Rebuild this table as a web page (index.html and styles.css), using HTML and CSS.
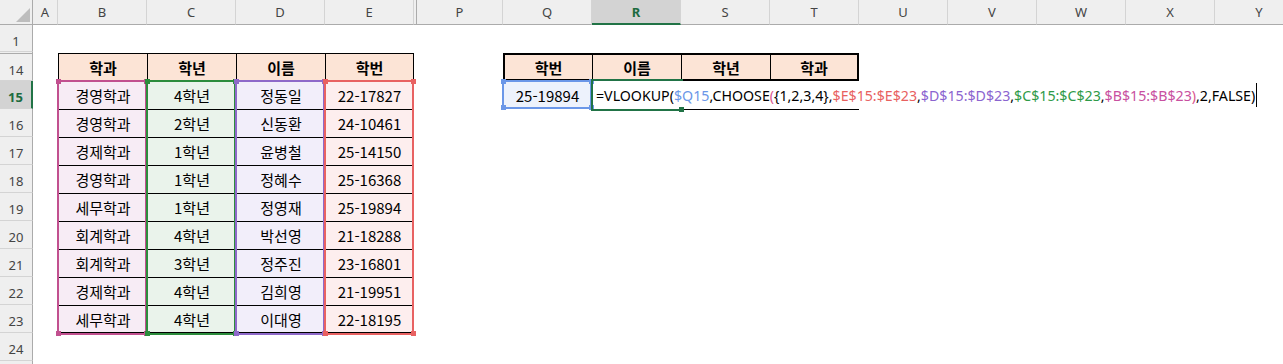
FILE: index.html
```html
<!DOCTYPE html>
<html lang="ko">
<head>
<meta charset="utf-8">
<title>VLOOKUP CHOOSE</title>
<link rel="stylesheet" href="styles.css">
</head>
<body>
<div class="sheet">
  <div class="ch corner"><svg width="33" height="25" viewBox="0 0 33 25"><polygon points="30,8 30,22 16,22" fill="#BDBDBD"/></svg></div>
  <div class="ch">A</div>
  <div class="ch">B</div>
  <div class="ch">C</div>
  <div class="ch">D</div>
  <div class="ch">E</div>
  <div class="ch hidcol"></div>
  <div class="ch">P</div>
  <div class="ch">Q</div>
  <div class="ch cur">R</div>
  <div class="ch">S</div>
  <div class="ch">T</div>
  <div class="ch">U</div>
  <div class="ch">V</div>
  <div class="ch">W</div>
  <div class="ch">X</div>
  <div class="ch">Y</div>

  <div class="rh">1</div>
  <div class="rh hidrow"></div>
  <div class="rh top">14</div>
  <div class="rh cur">15</div>
  <div class="rh">16</div>
  <div class="rh">17</div>
  <div class="rh">18</div>
  <div class="rh">19</div>
  <div class="rh">20</div>
  <div class="rh">21</div>
  <div class="rh">22</div>
  <div class="rh">23</div>
  <div class="rh">24</div>
  <div class="rh"></div>

  <div class="ltable">
    <div class="lhead">
      <div class="th">학과</div>
      <div class="th">학년</div>
      <div class="th">이름</div>
      <div class="th last">학번</div>
    </div>
    <div class="lbody">
      <div class="lcol mag">
        <div class="td">경영학과</div><div class="td">경영학과</div><div class="td">경제학과</div>
        <div class="td">경영학과</div><div class="td">세무학과</div><div class="td">회계학과</div>
        <div class="td">회계학과</div><div class="td">경제학과</div><div class="td">세무학과</div>
        <div class="hl"><i class="tl"></i><i class="tr"></i><i class="bl"></i><i class="br"></i></div>
      </div>
      <div class="lcol grn">
        <div class="td">4학년</div><div class="td">2학년</div><div class="td">1학년</div>
        <div class="td">1학년</div><div class="td">1학년</div><div class="td">4학년</div>
        <div class="td">3학년</div><div class="td">4학년</div><div class="td">4학년</div>
        <div class="hl"><i class="tl"></i><i class="tr"></i><i class="bl"></i><i class="br"></i></div>
      </div>
      <div class="lcol pur">
        <div class="td">정동일</div><div class="td">신동환</div><div class="td">윤병철</div>
        <div class="td">정혜수</div><div class="td">정영재</div><div class="td">박선영</div>
        <div class="td">정주진</div><div class="td">김희영</div><div class="td">이대영</div>
        <div class="hl"><i class="tl"></i><i class="tr"></i><i class="bl"></i><i class="br"></i></div>
      </div>
      <div class="lcol red last">
        <div class="td">22-17827</div><div class="td">24-10461</div><div class="td">25-14150</div>
        <div class="td">25-16368</div><div class="td">25-19894</div><div class="td">21-18288</div>
        <div class="td">23-16801</div><div class="td">21-19951</div><div class="td">22-18195</div>
        <div class="hl"><i class="tl"></i><i class="tr"></i><i class="bl"></i><i class="br"></i></div>
      </div>
    </div>
  </div>

  <div class="rtable">
    <div class="rhead">
      <div class="th q">학번</div>
      <div class="th mid">이름</div>
      <div class="th mid">학년</div>
      <div class="th t">학과</div>
    </div>
    <div class="rrow">
      <div class="rc qcell">25-19894
        <div class="hl blue"><i class="tl"></i><i class="tr"></i><i class="bl"></i><i class="br"></i></div>
      </div>
      <div class="rc rcell">
        <div class="sel"><i class="handle"></i></div>
        <span class="formula">=VLOOKUP(<span class="f-blue">$Q15</span>,CHOOSE<span class="f-par">(</span>{1,2,3,4},<span class="f-red">$E$15:$E$23</span>,<span class="f-pur">$D$15:$D$23</span>,<span class="f-grn">$C$15:$C$23</span>,<span class="f-mag">$B$15:$B$23</span><span class="f-par">)</span>,2,FALSE)<span class="caret"></span></span>
      </div>
      <div class="rc under"></div>
      <div class="rc under"></div>
    </div>
  </div>
</div>
</body>
</html>
```
FILE: styles.css
```css
* { box-sizing: border-box; }

html, body {
  margin: 0;
  padding: 0;
  background: #ffffff;
  overflow: hidden;
}

body {
  font-family: "Noto Sans CJK KR", "Noto Sans", sans-serif;
  color: #000;
}

.sheet {
  display: grid;
  grid-template-columns: 33px 25px repeat(4, 89px) 3px 86px repeat(9, 89px);
  grid-template-rows: 25px 27px 1px repeat(12, 28px);
  width: 1304px;
}

/* column headers */
.ch {
  grid-row: 1;
  background: #efefef;
  border-right: 1px solid #d4d4d4;
  border-bottom: 1px solid #ababab;
  display: flex;
  align-items: center;
  justify-content: center;
  font-family: "Noto Sans", sans-serif;
  font-size: 13px;
  color: #444;
}
.ch.corner {
  border-right: 1px solid #ababab;
  display: block;
}
.ch.corner svg { display: block; }
.ch.hidcol {
  border-right: 1px solid #ababab;
  border-left: 0;
}
.ch.cur {
  background: #d3d3d3;
  color: #1d6b3f;
  font-weight: bold;
  border-bottom: 2px solid #217346;
}

/* row headers */
.rh {
  grid-column: 1;
  background: #efefef;
  border-right: 1px solid #ababab;
  border-bottom: 1px solid #d4d4d4;
  display: flex;
  justify-content: center;
  align-items: center;
  padding-top: 5px;
  font-family: "Noto Sans", sans-serif;
  font-size: 13px;
  color: #444;
}
.rh.hidrow {
  border-bottom: 0;
  padding: 0;
}
.rh.top { border-top: 1px solid #ababab; }
.rh.cur {
  background: #d3d3d3;
  color: #1d6b3f;
  font-weight: bold;
  border-right: 2px solid #217346;
}

/* left table */
.ltable {
  grid-column: 3 / 7;
  grid-row: 4 / 14;
  display: flex;
  flex-direction: column;
  font-size: 15px;
}
.lhead { display: flex; }
.th {
  width: 89px;
  height: 28px;
  background: #fce4d6;
  border-top: 1px solid #000;
  border-left: 1px solid #000;
  font-weight: bold;
  display: flex;
  align-items: center;
  justify-content: center;
}
.lhead .th.last { border-right: 1px solid #000; }

.lbody { display: flex; }
.lcol {
  position: relative;
  width: 89px;
  display: flex;
  flex-direction: column;
}
.td {
  height: 28px;
  border-top: 1px solid #000;
  border-left: 1px solid #000;
  display: flex;
  align-items: center;
  justify-content: center;
}
.lcol .td:nth-child(9) { border-bottom: 1px solid #000; }
.lcol.last .td { border-right: 1px solid #000; }

.lcol.mag { background: #f7ecf5; --hc: #c1508f; }
.lcol.grn { background: #eaf3eb; --hc: #2c8c3c; }
.lcol.pur { background: #f2eefa; --hc: #8e69c9; }
.lcol.red { background: #fdeeee; --hc: #e86262; }

/* range highlight overlay */
.hl {
  position: absolute;
  top: -1px;
  left: -1px;
  right: 0;
  bottom: -2px;
  border: 2px solid var(--hc);
  pointer-events: none;
}
.hl i {
  position: absolute;
  width: 5px;
  height: 5px;
  background: var(--hc);
}
.hl .tl { left: -3px; top: -3px; }
.hl .tr { right: -4px; top: -3px; }
.hl .bl { left: -3px; bottom: -3px; }
.hl .br { right: -4px; bottom: -3px; }

/* right table */
.rtable {
  grid-column: 9 / 13;
  grid-row: 4 / 6;
  display: flex;
  flex-direction: column;
  font-size: 15px;
}
.rhead {
  display: flex;
  height: 28px;
  border: 2px solid #000;
}
.rhead .th {
  height: 24px;
  border-top: 0;
  border-left: 0;
}
.rhead .th.q { width: 87px; }
.rhead .th.mid { width: 89px; border-left: 1px solid #000; }
.rhead .th.t { width: 87px; border-left: 1px solid #000; }

.rrow { display: flex; height: 28px; }
.rc {
  width: 89px;
  height: 28px;
  position: relative;
  display: flex;
  align-items: center;
}
.qcell {
  justify-content: center;
  background: #edf2fc;
  --hc: #6b97e8;
}
.qcell .hl { bottom: 0; }
.rcell {
  z-index: 2;
  padding-left: 4px;
  white-space: nowrap;
}
.under { border-bottom: 1px solid #000; height: 29px; align-self: flex-start; }

.sel {
  position: absolute;
  top: -2px;
  left: -1px;
  right: -2px;
  bottom: -2px;
  border: 2px solid #217346;
  border-right: 0;
}
.sel .handle {
  position: absolute;
  right: -1px;
  bottom: -3px;
  width: 5px;
  height: 5px;
  background: #217346;
}

.formula {
  position: relative;
  display: flex;
  align-items: center;
  font-family: "Noto Sans", sans-serif;
  font-size: 14.2px;
}
.f-blue { color: #6b97e8; }
.f-red { color: #e8615f; }
.f-pur { color: #8b64cf; }
.f-grn { color: #2e9a47; }
.f-mag { color: #c850a0; }
.f-par { color: #d9578f; }
.caret {
  display: inline-block;
  width: 1px;
  height: 24px;
  margin-left: 1px;
  background: #000;
}
```
